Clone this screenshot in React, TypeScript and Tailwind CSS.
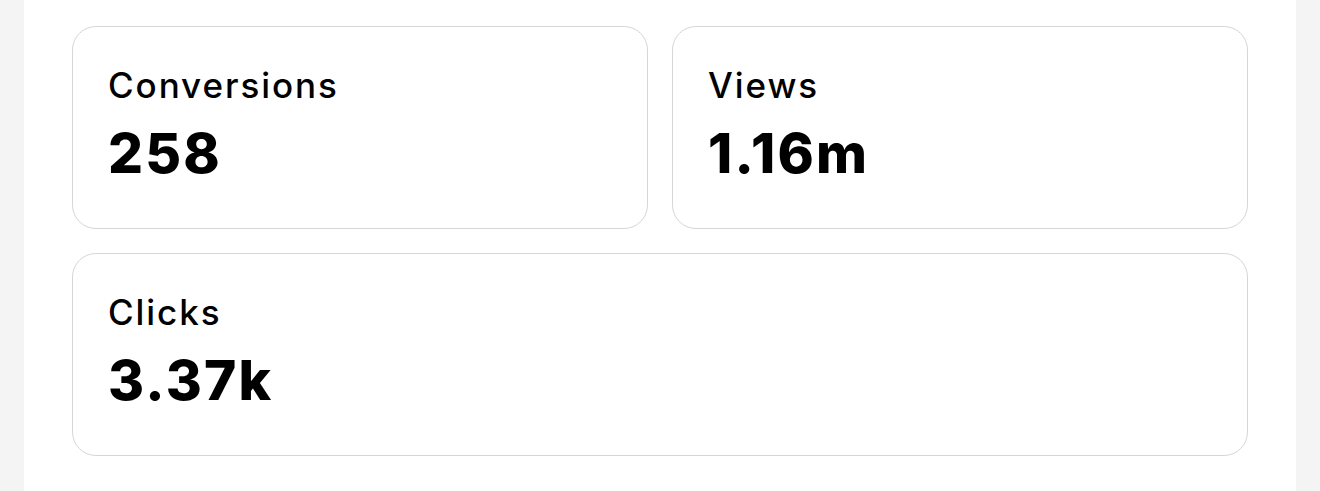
import React from 'react';

interface Stat {
  label: string;
  value: string;
  wide?: boolean;
}

const stats: Stat[] = [
  { label: 'Conversions', value: '258' },
  { label: 'Views', value: '1.16m' },
  { label: 'Clicks', value: '3.37k', wide: true },
];

const StatCard: React.FC<{ stat: Stat }> = ({ stat }) => (
  <div
    className={`h-[203px] rounded-[24px] border border-[#d6d6d6] bg-white px-[35px] pt-[35px] ${
      stat.wide ? 'col-span-2' : ''
    }`}
  >
    <div className="text-[35px] leading-[46px] font-medium tracking-[0.055em] text-black">{stat.label}</div>
    <div className="mt-[18px] text-[55px] leading-[55px] font-extrabold tracking-[0.04em] text-black">{stat.value}</div>
  </div>
);

export default function App() {
  return (
    <div className="min-h-[491px] bg-[#f4f4f4] px-[24px] font-['Inter',sans-serif]">
      <div className="min-h-[491px] bg-white px-[48px] pt-[26px]">
        <div className="grid grid-cols-2 gap-[24px]">
          {stats.map((s) => (
            <StatCard key={s.label} stat={s} />
          ))}
        </div>
      </div>
    </div>
  );
}
